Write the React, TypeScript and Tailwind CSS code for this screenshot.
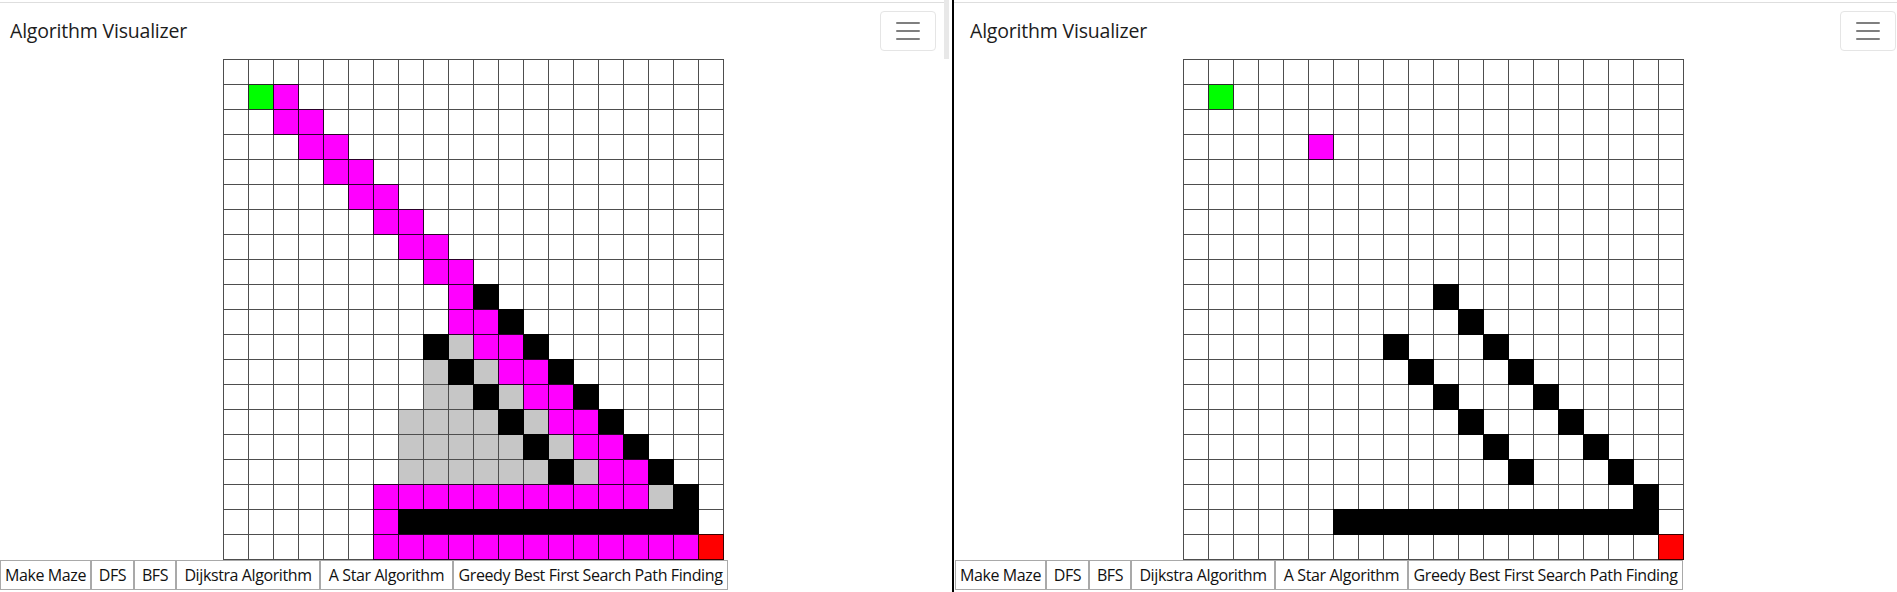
import React from 'react';

type Cell = '.' | 'S' | 'E' | 'P' | 'W' | 'V';

// '.' empty, S start, E end, P path, W wall, V visited
const leftBoard: string[] = [
  '....................',
  '.SP.................',
  '..PP................',
  '...PP...............',
  '....PP..............',
  '.....PP.............',
  '......PP............',
  '.......PP...........',
  '........PP..........',
  '.........PW.........',
  '.........PPW........',
  '........WVPPW.......',
  '........VWVPPW......',
  '........VVWVPPW.....',
  '.......VVVVWVPPW....',
  '.......VVVVVWVPPW...',
  '.......VVVVVVWVPPW..',
  '......PPPPPPPPPPPVW.',
  '......PWWWWWWWWWWWW.',
  '......PPPPPPPPPPPPPE',
];

const rightBoard: string[] = [
  '....................',
  '.S..................',
  '....................',
  '.....P..............',
  '....................',
  '....................',
  '....................',
  '....................',
  '....................',
  '..........W.........',
  '...........W........',
  '........W...W.......',
  '.........W...W......',
  '..........W...W.....',
  '...........W...W....',
  '............W...W...',
  '.............W...W..',
  '..................W.',
  '......WWWWWWWWWWWWW.',
  '...................E',
];

const cellClass: Record<Cell, string> = {
  '.': 'bg-white',
  S: 'bg-[#00ff00] shadow-[0_0_0_1px_#2a2a2a]',
  E: 'bg-[#ff0000] shadow-[0_0_0_1px_#3a0000]',
  P: 'bg-[#ff00ff] shadow-[0_0_0_1px_#2a002a]',
  W: 'bg-black shadow-[0_0_0_1px_#000]',
  V: 'bg-[#c6c6c6]',
};

const algorithms = [
  { label: 'Make Maze', w: 'w-[91px]' },
  { label: 'DFS', w: 'w-[43px]' },
  { label: 'BFS', w: 'w-[42px]' },
  { label: 'Dijkstra Algorithm', w: 'w-[144px]' },
  { label: 'A Star Algorithm', w: 'w-[133px]' },
  { label: 'Greedy Best First Search Path Finding', w: 'w-[275px]' },
];

const Hamburger = () => (
  <button className="flex h-[40px] w-[56px] items-center justify-center rounded-[4px] border border-[#e5e5e5] bg-white">
    <svg width="30" height="30" viewBox="0 0 30 30" fill="none">
      <path
        d="M4 7h22M4 15h22M4 23h22"
        stroke="rgba(0,0,0,0.5)"
        strokeWidth="2"
        strokeLinecap="round"
        strokeMiterlimit="10"
      />
    </svg>
  </button>
);

const Board = ({ rows }: { rows: string[] }) => (
  <div className="grid w-max grid-cols-[repeat(20,24px)] gap-px bg-[#4e4e4e] p-px">
    {rows.flatMap((row, r) =>
      row.split('').map((ch, c) => (
        <div key={`${r}-${c}`} className={`h-[24px] w-[24px] ${cellClass[ch as Cell]}`} />
      ))
    )}
  </div>
);

interface PaneProps {
  rows: string[];
  className: string;
  headerPad: string;
  boardPad: string;
  barPad: string;
}

const Pane = ({ rows, className, headerPad, boardPad, barPad }: PaneProps) => (
  <div className={`flex flex-col pt-[2px] ${className}`}>
    <div className="border-t border-[#dedede]">
      <nav className={`flex h-[56px] items-center justify-between ${headerPad}`}>
        <span className="text-[19.5px] leading-[28px] tracking-[-0.2px] text-[#1c1c1c]">Algorithm Visualizer</span>
        <Hamburger />
      </nav>
      <div className={boardPad}>
        <Board rows={rows} />
      </div>
      <div className={`flex ${barPad}`}>
        {algorithms.map((a) => (
          <button
            key={a.label}
            className={`h-[30px] ${a.w} shrink-0 border border-[#a9a9a9] bg-white text-center text-[16px] tracking-[-0.4px] whitespace-nowrap text-[#111]`}
          >
            {a.label}
          </button>
        ))}
      </div>
    </div>
  </div>
);

export default function App() {
  return (
    <div
      className="flex h-[592px] w-[1897px] overflow-hidden bg-white"
      style={{ fontFamily: "'Open Sans', 'Noto Sans', sans-serif" }}
    >
      <Pane
        rows={leftBoard}
        className="w-[944px] shrink-0"
        headerPad="pl-[10px] pr-[8px]"
        boardPad="pl-[223px]"
        barPad="pl-0"
      />
      <div className="w-[8px] shrink-0">
        <div className="h-[59px] w-[5px] bg-[#e8e8e8]" />
      </div>
      <div className="w-[2px] shrink-0 bg-black" />
      <Pane
        rows={rightBoard}
        className="flex-1"
        headerPad="pl-[16px] pr-[1px]"
        boardPad="pl-[229px]"
        barPad="pl-[1px]"
      />
    </div>
  );
}
